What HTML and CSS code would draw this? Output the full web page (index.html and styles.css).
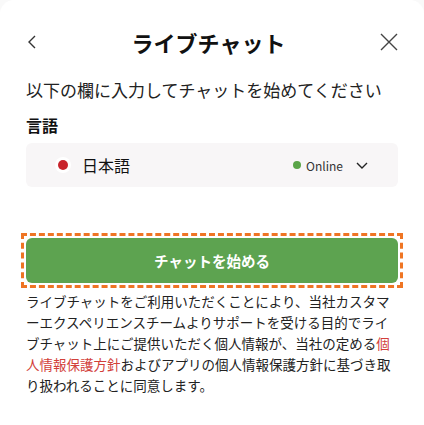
FILE: index.html
```html
<!DOCTYPE html>
<html lang="ja">
<head>
<meta charset="utf-8">
<link rel="stylesheet" href="styles.css">
</head>
<body>
<div class="card">
  <header class="header">
    <button class="icon-btn back" aria-label="戻る">
      <svg width="10" height="14" viewBox="0 0 10 14"><path d="M8 1 L2 7 L8 13" fill="none" stroke="#333" stroke-width="1.4"/></svg>
    </button>
    <h1 class="title">ライブチャット</h1>
    <button class="icon-btn close" aria-label="閉じる">
      <svg width="18" height="18" viewBox="0 0 18 18"><path d="M1 1 L17 17 M17 1 L1 17" fill="none" stroke="#444" stroke-width="1.4"/></svg>
    </button>
  </header>
  <p class="subtitle">以下の欄に入力してチャットを始めてください</p>
  <div class="label">言語</div>
  <div class="select">
    <span class="flag"><span class="flag-dot"></span></span>
    <span class="lang">日本語</span>
    <span class="status"><span class="status-dot"></span>Online</span>
    <svg class="chev" width="12" height="7" viewBox="0 0 12 7"><path d="M1 1 L6 6 L11 1" fill="none" stroke="#222" stroke-width="1.4"/></svg>
  </div>
  <div class="focus-ring">
    <button class="start">チャットを始める</button>
  </div>
  <p class="notice">ライブチャットをご利用いただくことにより、当社カスタマーエクスペリエンスチームよりサポートを受ける目的でライブチャット上にご提供いただく個人情報が、当社の定める<a class="link" href="#">個人情報保護方針</a>およびアプリの個人情報保護方針に基づき取り扱われることに同意します。</p>
</div>
</body>
</html>
```
FILE: styles.css
```css
* { box-sizing: border-box; }
html, body { margin: 0; padding: 0; }
body {
  background: #f9f9f9;
  font-family: "Noto Sans CJK JP", "Noto Sans", sans-serif;
  color: #222;
}
.card {
  background: #fff;
  min-height: 425px;
  border-radius: 14px 14px 0 0;
  padding: 20px 26px 0 26px;
}
.header {
  height: 44px;
  display: flex;
  align-items: center;
  justify-content: space-between;
}
.icon-btn {
  background: none;
  border: none;
  padding: 0;
  display: flex;
  align-items: center;
  cursor: pointer;
}
.back { margin-left: 1px; }
.title {
  margin: 0;
  font-size: 22px;
  font-weight: 700;
  color: #111;
  line-height: 30px;
}
.subtitle {
  margin: 14px 0 0 0;
  font-size: 17px;
  line-height: 24px;
  color: #222;
}
.label {
  margin-top: 11px;
  font-size: 16px;
  font-weight: 700;
  line-height: 24px;
  color: #111;
}
.select {
  margin-top: 6px;
  height: 44px;
  background: #f8f6f7;
  border-radius: 6px;
  display: flex;
  align-items: center;
  padding: 0 30px 0 29px;
}
.flag {
  width: 16px;
  height: 16px;
  border-radius: 50%;
  background: #fff;
  display: flex;
  align-items: center;
  justify-content: center;
}
.flag-dot {
  width: 10px;
  height: 10px;
  border-radius: 50%;
  background: #c8242c;
}
.lang {
  margin-left: 11px;
  font-size: 16px;
  color: #111;
  flex: 1;
}
.status {
  display: flex;
  align-items: center;
  font-size: 12px;
  color: #333;
  gap: 5px;
}
.status-dot {
  width: 8px;
  height: 8px;
  border-radius: 50%;
  background: #5aa548;
}
.chev { margin-left: 13px; }
.focus-ring {
  margin: 46px -5px 0 -5px;
  padding: 2px;
  border: 3px dashed #ef7524;
}
.start {
  display: block;
  width: 100%;
  height: 45px;
  border: none;
  border-radius: 6px;
  background: #5da350;
  color: #fff;
  font-family: inherit;
  font-size: 14.5px;
  font-weight: 700;
  outline: none;
}
.notice {
  margin: 3px 0 0 0;
  font-size: 13.5px;
  line-height: 21px;
  color: #222;
}
.link {
  color: #d2403a;
  text-decoration: none;
}
```
